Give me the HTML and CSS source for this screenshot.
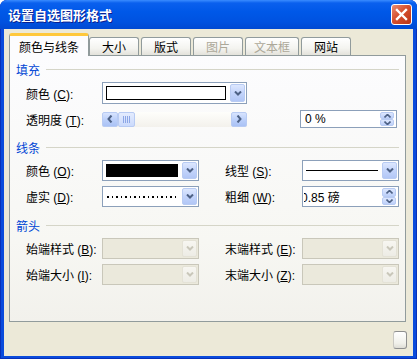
FILE: index.html
```html
<!DOCTYPE html>
<html lang="zh">
  <head>
    <meta charset="utf-8">
    <title>设置自选图形格式</title>
    <link rel="stylesheet" href="styles.css">
  </head>
  <body>
    <div class="window">
      <div class="titlebar">
        <span class="title">设置自选图形格式</span>
        <span class="close">
          <svg width="13" height="13" viewBox="0 0 13 13"><path d="M2 2 L11 11 M11 2 L2 11" stroke="#fff" stroke-width="2.4" stroke-linecap="square"/></svg>
        </span>
      </div>

      <div class="dialog">
        <div class="tabs">
          <div class="tab active">颜色与线条</div>
          <div class="tab">大小</div>
          <div class="tab">版式</div>
          <div class="tab disabled">图片</div>
          <div class="tab disabled">文本框</div>
          <div class="tab">网站</div>
        </div>

        <div class="panel">
          <!-- fill -->
          <div class="group">
            <div class="group-title">填充</div>
            <div class="rows">
              <div class="row tall">
                <span class="label">颜色 (<u>C</u>):</span>
                <div class="combo wide">
                  <span class="value swatch white"></span>
                  <span class="drop"><svg width="8" height="5" viewBox="0 0 8 5"><path d="M1 0.5 L4 3.5 L7 0.5" fill="none" stroke="#4D6185" stroke-width="2"/></svg></span>
                </div>
              </div>
              <div class="row short">
                <span class="label">透明度 (<u>T</u>):</span>
                <div class="scrollbar">
                  <span class="sbtn"><svg width="6" height="8" viewBox="0 0 6 8"><path d="M4.5 0.5 L1.5 4 L4.5 7.5" fill="none" stroke="#4D6185" stroke-width="2"/></svg></span>
                  <span class="thumb"><i></i><i></i><i></i><i></i></span>
                  <span class="track"></span>
                  <span class="sbtn"><svg width="6" height="8" viewBox="0 0 6 8"><path d="M1.5 0.5 L4.5 4 L1.5 7.5" fill="none" stroke="#4D6185" stroke-width="2"/></svg></span>
                </div>
                <div class="spinner percent">
                  <span class="text">0 %</span>
                  <span class="spin">
                    <span><svg width="7" height="4" viewBox="0 0 7 4"><path d="M0.5 3.5 L3.5 0.5 L6.5 3.5" fill="none" stroke="#4D6185" stroke-width="1.6"/></svg></span>
                    <span><svg width="7" height="4" viewBox="0 0 7 4"><path d="M0.5 0.5 L3.5 3.5 L6.5 0.5" fill="none" stroke="#4D6185" stroke-width="1.6"/></svg></span>
                  </span>
                </div>
              </div>
            </div>
          </div>

          <!-- line -->
          <div class="group">
            <div class="group-title">线条</div>
            <div class="rows">
              <div class="row">
                <span class="label">颜色 (<u>O</u>):</span>
                <div class="combo">
                  <span class="value swatch black"></span>
                  <span class="drop"><svg width="8" height="5" viewBox="0 0 8 5"><path d="M1 0.5 L4 3.5 L7 0.5" fill="none" stroke="#4D6185" stroke-width="2"/></svg></span>
                </div>
                <span class="label right">线型 (<u>S</u>):</span>
                <div class="combo">
                  <span class="value solid-line"></span>
                  <span class="drop"><svg width="8" height="5" viewBox="0 0 8 5"><path d="M1 0.5 L4 3.5 L7 0.5" fill="none" stroke="#4D6185" stroke-width="2"/></svg></span>
                </div>
              </div>
              <div class="row">
                <span class="label">虚实 (<u>D</u>):</span>
                <div class="combo">
                  <span class="value dotted-line"></span>
                  <span class="drop"><svg width="8" height="5" viewBox="0 0 8 5"><path d="M1 0.5 L4 3.5 L7 0.5" fill="none" stroke="#4D6185" stroke-width="2"/></svg></span>
                </div>
                <span class="label right">粗细 (<u>W</u>):</span>
                <div class="spinner weight">
                  <span class="text clipped">0.85 磅</span>
                  <span class="spin">
                    <span><svg width="7" height="4" viewBox="0 0 7 4"><path d="M0.5 3.5 L3.5 0.5 L6.5 3.5" fill="none" stroke="#4D6185" stroke-width="1.6"/></svg></span>
                    <span><svg width="7" height="4" viewBox="0 0 7 4"><path d="M0.5 0.5 L3.5 3.5 L6.5 0.5" fill="none" stroke="#4D6185" stroke-width="1.6"/></svg></span>
                  </span>
                </div>
              </div>
            </div>
          </div>

          <!-- arrows -->
          <div class="group">
            <div class="group-title">箭头</div>
            <div class="rows">
              <div class="row">
                <span class="label">始端样式 (<u>B</u>):</span>
                <div class="combo off">
                  <span class="value"></span>
                  <span class="drop"><svg width="8" height="5" viewBox="0 0 8 5"><path d="M1 0.5 L4 3.5 L7 0.5" fill="none" stroke="#C9C7BA" stroke-width="2"/></svg></span>
                </div>
                <span class="label right">末端样式 (<u>E</u>):</span>
                <div class="combo off">
                  <span class="value"></span>
                  <span class="drop"><svg width="8" height="5" viewBox="0 0 8 5"><path d="M1 0.5 L4 3.5 L7 0.5" fill="none" stroke="#C9C7BA" stroke-width="2"/></svg></span>
                </div>
              </div>
              <div class="row">
                <span class="label">始端大小 (<u>I</u>):</span>
                <div class="combo off">
                  <span class="value"></span>
                  <span class="drop"><svg width="8" height="5" viewBox="0 0 8 5"><path d="M1 0.5 L4 3.5 L7 0.5" fill="none" stroke="#C9C7BA" stroke-width="2"/></svg></span>
                </div>
                <span class="label right">末端大小 (<u>Z</u>):</span>
                <div class="combo off">
                  <span class="value"></span>
                  <span class="drop"><svg width="8" height="5" viewBox="0 0 8 5"><path d="M1 0.5 L4 3.5 L7 0.5" fill="none" stroke="#C9C7BA" stroke-width="2"/></svg></span>
                </div>
              </div>
            </div>
          </div>
        </div>

        <div class="footer">
          <span class="button"></span>
        </div>
      </div>
    </div>
  </body>
</html>
```

FILE: styles.css
```css
* {
  box-sizing: border-box;
}

body {
  margin: 0;
  font-family: "Liberation Sans", "Noto Sans CJK SC", sans-serif;
  font-size: 12px;
  color: #000;
  background: #fff;
}

u {
  text-decoration: underline;
}

.window {
  width: 417px;
  height: 359px;
  display: flex;
  flex-direction: column;
  background: #0A4BDC;
  border-radius: 7px 7px 0 0;
  box-shadow: inset 0 0 0 1px #0831B9;
}

.titlebar {
  height: 29px;
  display: flex;
  align-items: center;
  justify-content: space-between;
  padding: 0 5px 0 8px;
  border-radius: 7px 7px 0 0;
  background: linear-gradient(#3A8CFF 0, #0A60EE 3px, #0058E8 40%, #0052E0 75%, #0049D2 100%);
}

.title {
  color: #fff;
  font-weight: bold;
  font-size: 13px;
  text-shadow: 1px 1px #0B1F8F;
}

.close {
  width: 21px;
  height: 21px;
  display: flex;
  align-items: center;
  justify-content: center;
  border: 1px solid #fff;
  border-radius: 3px;
  background: linear-gradient(135deg, #EB8E74, #D5502F 45%, #BC3416);
}

.dialog {
  flex: 1;
  margin: 0 4px 3px 4px;
  background: #ECE9D8;
  display: flex;
  flex-direction: column;
}

/* tabs */
.tabs {
  display: flex;
  align-items: flex-end;
  height: 22px;
  margin: 4px 0 0 5px;
  position: relative;
  z-index: 1;
}

.tab {
  height: 18px;
  min-width: 50px;
  padding: 0 8px;
  margin-left: 2px;
  display: flex;
  align-items: center;
  justify-content: center;
  border: 1px solid #919B9C;
  border-bottom: none;
  border-radius: 3px 3px 0 0;
  background: linear-gradient(#FFFFFF, #F4F4F0 60%, #E3E2DB);
}

.tab.active {
  height: 23px;
  margin-left: 0;
  margin-bottom: -1px;
  padding: 0 9px;
  border-top: 3px solid #FFC83C;
  background: #FCFCFE;
}

.tab.active + .tab {
  margin-left: 0;
}

.tab.disabled {
  color: #ACA899;
}

/* panel */
.panel {
  height: 267px;
  margin: 0 7px 0 5px;
  padding: 6px 6px 0 6px;
  border: 1px solid #919B9C;
  background: linear-gradient(#FCFCFE, #F7F7F3 70%, #F2F1EC);
}

.group + .group {
  margin-top: 11px;
}

.group-title {
  height: 14px;
  display: flex;
  align-items: center;
  color: #0046D5;
}

.group-title::after {
  content: "";
  flex: 1;
  height: 1px;
  margin-left: 6px;
  background: #D5D5C8;
}

.rows {
  display: flex;
  flex-direction: column;
  gap: 5px;
  margin-top: 6px;
}

.row {
  height: 21px;
  display: flex;
  align-items: center;
  padding-left: 10px;
}

.row.tall {
  height: 22px;
}

.row.short {
  height: 20px;
}

.label {
  width: 76px;
  white-space: nowrap;
}

.label.right {
  width: 77px;
  margin-left: 26px;
}

/* combo box */
.combo {
  width: 97px;
  height: 21px;
  display: flex;
  align-items: center;
  padding: 1px;
  border: 1px solid #8CA0BA;
  background: #fff;
}

.combo.wide {
  width: 145px;
  height: 22px;
}

.combo .value {
  flex: 1;
  align-self: stretch;
  margin: 2px 4px 2px 2px;
}

.swatch {
  border: 1px solid #000;
}

.swatch.black {
  background: #000;
}

.swatch.white {
  background: #fff;
}

.solid-line {
  background: linear-gradient(transparent 6px, #000 6px, #000 7px, transparent 7px);
}

.dotted-line {
  background: repeating-linear-gradient(90deg, #000 0 1.6px, transparent 1.6px 4.5px);
  background-size: 100% 2px;
  background-repeat: no-repeat;
  background-position: 1px 6px;
}

.drop {
  width: 15px;
  height: 17px;
  display: flex;
  align-items: center;
  justify-content: center;
  border: 1px solid #B8CBF3;
  border-radius: 2px;
  background: linear-gradient(#DDE7FE, #C3D4FB 50%, #B2C7F6);
}

.combo.wide .drop {
  height: 18px;
}

.combo.off {
  border-color: #C9C7BA;
  background: #EBE9DC;
}

.combo.off .drop {
  border-color: #E4E2D6;
  background: linear-gradient(#F7F6F1, #EDECE5);
}

/* scroll bar */
.scrollbar {
  width: 145px;
  height: 15px;
  display: flex;
  background: linear-gradient(#FEFEFB, #F3F1EC);
}

.sbtn {
  width: 16px;
  display: flex;
  align-items: center;
  justify-content: center;
  border: 1px solid #B8CBF3;
  border-radius: 2px;
  background: linear-gradient(#D8E4FE, #BCD0FA 50%, #AAC2F5);
}

.thumb {
  width: 17px;
  display: flex;
  align-items: center;
  justify-content: center;
  gap: 1px;
  border: 1px solid #B8CBF3;
  border-radius: 2px;
  background: linear-gradient(#E4ECFE, #CBDAFC);
}

.thumb i {
  width: 1px;
  height: 7px;
  background: #8CA6E6;
}

.track {
  flex: 1;
}

/* spinner */
.spinner {
  width: 97px;
  display: flex;
  align-items: center;
  padding: 1px;
  border: 1px solid #8CA0BA;
  background: #fff;
}

.spinner.percent {
  height: 18px;
  margin-left: 53px;
}

.spinner.weight {
  height: 21px;
}

.spinner .text {
  flex: 1;
  padding-left: 3px;
  white-space: nowrap;
  overflow: hidden;
}

.spinner .text.clipped {
  padding-left: 0;
  text-indent: -3px;
}

.spin {
  width: 14px;
  align-self: stretch;
  display: flex;
  flex-direction: column;
  margin-right: 1px;
}

.spin span {
  flex: 1;
  display: flex;
  align-items: center;
  justify-content: center;
  border: 1px solid #B8CBF3;
  border-radius: 2px;
  background: linear-gradient(#DDE7FE, #BCCFF9);
}

/* bottom */
.footer {
  flex: 1;
  display: flex;
  justify-content: flex-end;
  padding: 9px 6px 0 0;
}

.button {
  width: 14px;
  height: 18px;
  border: 1px solid #8E8F8F;
  border-left-color: #C9C8C2;
  border-radius: 3px;
  background: linear-gradient(#FFFFFF, #F0F0EA 70%, #DEDDD6);
}
```
